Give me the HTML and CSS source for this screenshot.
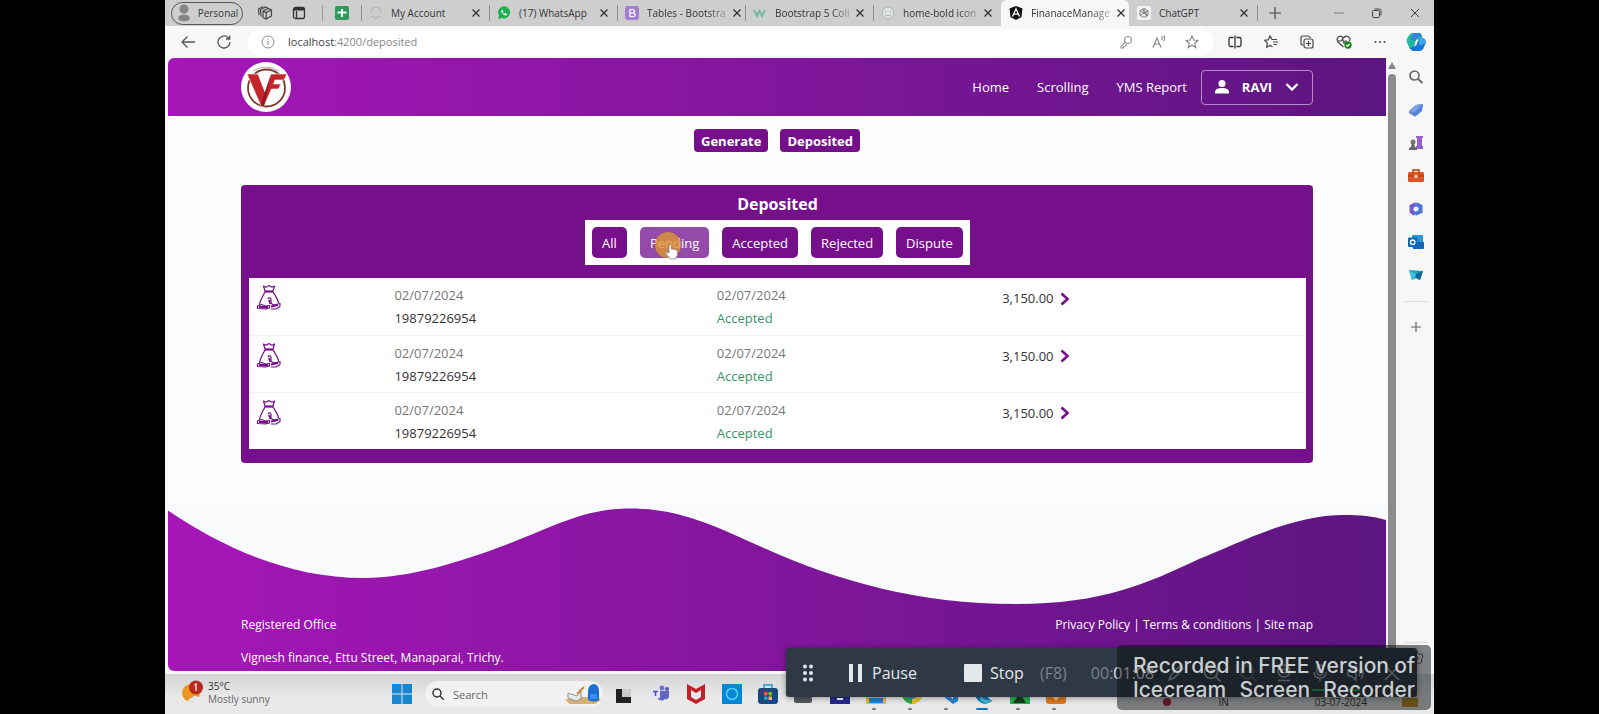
FILE: index.html
```html
<!DOCTYPE html>
<html lang="en">
<head>
<meta charset="utf-8">
<title>FinanaceManagement</title>
<link rel="stylesheet" href="styles.css">
</head>
<body>
<svg class="defs" aria-hidden="true">
  <symbol id="x" viewBox="0 0 10 10"><path d="M1.5 1.5l7 7M8.5 1.5l-7 7" stroke="currentColor" stroke-width="1.3" fill="none"/></symbol>
  <symbol id="chev" viewBox="0 0 12 16"><path d="M2.5 2.5L8.500 8l-6 5.500" stroke="#75108a" stroke-width="2.600" fill="none"/></symbol>
  <symbol id="bag" viewBox="0 0 26 26"><g fill="none" stroke="#75108a" stroke-width="1.200" stroke-linejoin="round"><path d="M9 7L7.500 2l2.500 1.200L13 1.500l3 1.700L18.500 2 17 7M9 8c-2 4-5 8-5.500 13M17 8c2 3 5 7 5.500 11"/><path d="M8.500 7.500h9" stroke-width="2.200"/><path d="M1.500 22l4-1.500 4 1.500 4-.500v2.500l-4 .800-8-.300zM12 15c1-2 3-1 3 .500v4l3 1.500 6-1.500v3l-4 2.500h-5"/><path d="M15 22.500l7-1.500M3 23h9M13 16l1.500 4" stroke-width="2"/></g></symbol>
</svg>
<div class="screen">
  <header class="tabs">
    <button class="profile"><svg width="16" height="20" viewBox="0 0 16 20"><circle cx="8" cy="6" r="4.500" fill="#858585"/><path d="M2 16c0-3 2-4.500 6-4.500s6 1.500 6 4.500c-2 3-10 3-12 0z" fill="#858585"/></svg>Personal</button>
    <div class="tab-tools">
      <svg width="16" height="16" viewBox="0 0 16 16" fill="none" stroke="#444" stroke-width="1.200"><path d="M6 6l5-2.500L14.500 5v6L9 14l-3-1.500zM6 6l3.200 1.500L14.500 5M9.200 7.500V14M4 11.500L3.500 4.500 8.500 2 11 3M2 10L1.500 4 6 1.500"/></svg>
      <svg width="14" height="14" viewBox="0 0 14 14" fill="none" stroke="#333" stroke-width="1.300"><rect x="1.500" y="1.500" width="11" height="11" rx="2"/><path d="M2 3h10" stroke-width="3"/><path d="M4.500 5v7"/></svg>
    </div>
    <div class="pinned"><svg width="14" height="14" viewBox="0 0 14 14"><rect width="14" height="14" rx="2" fill="#2c9b57"/><path d="M7 3v8M2.500 6.500h9" stroke="#fff" stroke-width="2"/></svg></div>
    <div class="tab"><svg class="fav" viewBox="0 0 14 14"><path d="M2 6a5 5 0 0 1 10 0M3 10c2 2.500 6 2.500 8 0" fill="none" stroke="#b4b4b4" stroke-width="1.500"/></svg><span>My Account</span><button aria-label="Close tab"><svg><use href="#x"/></svg></button></div>
    <div class="tab"><svg class="fav" viewBox="0 0 14 14"><path d="M1 13l1-3.500A6 6 0 1 1 5 12z" fill="#1fae50"/><path d="M4.500 4.200c-1 2 2.500 5.800 5 5.200l.500-1.300-1.800-1-.8.800C6.500 7.500 6 7 5.800 6.300l.7-.8-.7-1.500z" fill="#fff"/></svg><span>(17) WhatsApp</span><button aria-label="Close tab"><svg><use href="#x"/></svg></button></div>
    <div class="tab cut"><svg class="fav" viewBox="0 0 14 14"><rect width="14" height="14" rx="3" fill="#a57fd0"/><path d="M5 3.500h2.500q2 0 2 1.700T7.500 7H5zM5 7h3q2 0 2 1.800t-2 1.700H5z" fill="none" stroke="#fff" stroke-width="1.200"/></svg><span>Tables - Bootstra</span><button aria-label="Close tab"><svg><use href="#x"/></svg></button></div>
    <div class="tab cut"><svg class="fav" viewBox="0 0 14 14"><path d="M1 4l3 6 2.500-5L9 10l3-6" fill="none" stroke="#74b8a0" stroke-width="2"/></svg><span>Bootstrap 5 Coll</span><button aria-label="Close tab"><svg><use href="#x"/></svg></button></div>
    <div class="tab cut"><svg class="fav" viewBox="0 0 14 14"><circle cx="7" cy="7" r="6" fill="#dde1e1" stroke="#a9b1b1"/><path d="M4 8c1.500 2.500 4.500 2.500 6 0M4.500 5v1M9.500 5v1" fill="none" stroke="#9aa" /></svg><span>home-bold icon</span><button aria-label="Close tab"><svg><use href="#x"/></svg></button></div>
    <div class="tab cut active"><svg class="fav" viewBox="0 0 14 14"><path d="M7 0l6.500 2.500-1 8.500L7 14l-5.500-3L.5 2.500z" fill="#111"/><path d="M3.500 10.500L7 2.800l3.500 7.700M5 8.200h4" fill="none" stroke="#fff" stroke-width="1.300"/></svg><span>FinanaceManage</span><button aria-label="Close tab"><svg><use href="#x"/></svg></button></div>
    <div class="tab"><svg class="fav" viewBox="0 0 14 14"><rect width="14" height="14" rx="2" fill="#f3f3f3"/><path d="M7 2.500l4 2.200v4.600l-4 2.200-4-2.200V4.700zM7 2.500v4.700l4 2.200M3 4.700l4 2.500-4 2.200M7 7.200l4-2.500M5 3.600l4 2.500v4.300" fill="none" stroke="#666" stroke-width=".8"/></svg><span>ChatGPT</span><button aria-label="Close tab"><svg><use href="#x"/></svg></button></div>
    <button class="new-tab" aria-label="New tab"><svg width="12" height="12" viewBox="0 0 12 12"><path d="M6 0v12M0 6h12" stroke="#444" stroke-width="1.200"/></svg></button>
    <div class="win">
      <button aria-label="Minimise"><svg width="10" height="10" viewBox="0 0 10 10"><path d="M0 5h10" stroke="#777"/></svg></button>
      <button aria-label="Restore"><svg width="10" height="10" viewBox="0 0 10 10" fill="none" stroke="#444"><rect x=".5" y="2.500" width="7" height="7" rx="1"/><path d="M2.500 1h5Q9 1 9 2.500v5"/></svg></button>
      <button aria-label="Close"><svg width="10" height="10" viewBox="0 0 10 10"><path d="M1 1l8 8M9 1L1 9" stroke="#444"/></svg></button>
    </div>
  </header>

  <div class="toolbar">
    <div class="nav-buttons">
      <button aria-label="Back"><svg width="14" height="14" viewBox="0 0 14 14" fill="none" stroke="#555" stroke-width="1.300"><path d="M14 7H1M6.500 1.500L1 7l5.500 5.500"/></svg></button>
      <button aria-label="Reload"><svg width="14" height="14" viewBox="0 0 14 14" fill="none" stroke="#555" stroke-width="1.300"><path d="M13 7a6 6 0 1 1-2-4.500L12.500 4M12.700.5V4H9"/></svg></button>
    </div>
    <div class="address">
      <svg width="14" height="14" viewBox="0 0 14 14" fill="none" stroke="#888"><circle cx="7" cy="7" r="6"/><path d="M7 6v4M7 3.500v1.200"/></svg>
      <a href="#" class="url"><b>localhost</b>:4200/deposited</a>
      <svg width="14" height="14" viewBox="0 0 14 14" fill="none" stroke="#999" stroke-width="1.200"><circle cx="9" cy="5" r="3.500"/><path d="M6.500 7L2 11.500V13h2.500v-1.500H6L8 8.500"/></svg>
      <svg width="14" height="14" viewBox="0 0 14 14" fill="none" stroke="#888" stroke-width="1.200"><path d="M1 12.500L5 3l4 9.500M2.500 9h5M9.500 1.500q1.500 1.500 0 3.500M11.500.5q2.500 2.500 0 5.500"/></svg>
      <svg width="14" height="14" viewBox="0 0 14 14" fill="none" stroke="#888" stroke-width="1.200"><path d="M7 1l1.800 4 4.200.4-3.200 2.900 1 4.200L7 10.300l-3.800 2.200 1-4.200L1 5.400 5.200 5z"/></svg>
    </div>
    <div class="tools">
      <button aria-label="Split screen"><svg width="14" height="14" viewBox="0 0 14 14" fill="none" stroke="#333" stroke-width="1.300"><path d="M5.500 2.500h-3Q1 2.500 1 4v6q0 1.500 1.500 1.500h3M8.500 2.500h3Q13 2.500 13 4v6q0 1.500-1.500 1.500h-3M7 .5v13"/></svg></button>
      <button aria-label="Favourites"><svg width="14" height="14" viewBox="0 0 14 14" fill="none" stroke="#444" stroke-width="1.200"><path d="M13 4.500H8L6 1 4.300 4.800.7 5.300l2.700 2.900-.7 4L6 10.500l2.500 1.300M9 7h5M9.500 9.500H13"/></svg></button>
      <button aria-label="Collections"><svg width="14" height="14" viewBox="0 0 14 14" fill="none" stroke="#444" stroke-width="1.200"><path d="M3 10Q1 10 1 8V3q0-2 2-2h5q2 0 2 2"/><rect x="4" y="4" width="9" height="9" rx="2"/><path d="M8.500 6v5M6 8.500h5"/></svg></button>
      <button aria-label="Browser essentials"><svg width="16" height="14" viewBox="0 0 16 14" fill="none" stroke="#444" stroke-width="1.200"><path d="M7.500 12L2 7Q0 4 2.500 2T7.500 3Q10 0 12.500 2t1 4M2 6h3l1.500-2L8 8l1-2h2"/><circle cx="12" cy="10" r="3.700" fill="#1c831c" stroke="none"/><path d="M10.300 10l1.200 1.200L13.800 9" stroke="#fff"/></svg></button>
      <button aria-label="More"><svg width="12" height="4" viewBox="0 0 12 4" fill="#444"><circle cx="1.500" cy="2" r="1"/><circle cx="6" cy="2" r="1"/><circle cx="10.500" cy="2" r="1"/></svg></button>
    </div>
    <button class="copilot" aria-label="Copilot"><svg width="20" height="20" viewBox="0 0 20 20"><path d="M7 1h6q2 0 3 3l1 4-7 1-3 9q-3 0-4-3L.8 10Q0 7 2 5q2-4 5-4z" fill="#22b5a0"/><path d="M13 19H7q-2 0-3-3l5-2 3-8h5q3 1 2.700 5L18 15q-1 4-5 4z" fill="#1976d5"/><path d="M7 1h6q2 0 3 4h-4L10 9 5 8z" fill="#2f86d8"/><path d="M12 6h5q3 1 2.700 5l-6 3z" fill="#3fa5ee"/><path d="M8.500 14l1.800-6.500h2L10.500 13z" fill="#fff"/></svg></button>
  </div>

  <div class="main">
    <div class="page">
      <nav class="site-nav">
        <a href="#" aria-label="Vignesh finance"><svg class="logo" viewBox="0 0 50 50"><circle cx="25" cy="25" r="25" fill="#fff"/><path d="M12 9Q25 1 38 9" fill="none" stroke="#c8a7a7" stroke-width="1"/><circle cx="25.500" cy="26" r="18.500" fill="none" stroke="#7b3a2c" stroke-width="1.800"/><path d="M6 12h11l7 18 6-18h16l-3 6H34l-1.500 4H40l-2.500 5h-7L23 44h-3z" fill="#c4262c" stroke="#fff" stroke-width=".6"/><path d="M24 30l6-18-7 32h-3z" fill="#8d171d"/></svg></a>
        <div class="links">
          <a href="#">Home</a><a href="#">Scrolling</a><a href="#">YMS Report</a>
          <button class="user"><svg width="14" height="14" viewBox="0 0 14 14" fill="#fff"><circle cx="7" cy="3.500" r="3.500"/><path d="M0 13.500V12q0-4 7-4t7 4v1.500z"/></svg><b>RAVI</b><svg width="14" height="10" viewBox="0 0 14 10"><path d="M1.500 2L7 7.500 12.500 2" fill="none" stroke="#fff" stroke-width="2.400"/></svg></button>
        </div>
      </nav>
      <div class="actions"><button>Generate</button><button>Deposited</button></div>
      <section class="card">
        <h1>Deposited</h1>
        <div class="filters">
          <button>All</button>
          <button class="hover">Pending<svg class="pointer" width="26" height="28" viewBox="0 0 26 28"><circle cx="13" cy="13" r="13" fill="#dc9630" fill-opacity=".8"/><path d="M14 13q1.500-1 2 .5l.5 3.500 4 .5q2 .5 2 2.500v3l-2 4h-5L11 22q-1-2 1-2l2 1z" fill="#fff" stroke="#777" stroke-width=".7"/></svg></button>
          <button>Accepted</button><button>Rejected</button><button>Dispute</button>
        </div>
        <table>
          <tr><td><svg class="bag"><use href="#bag"/></svg></td><td><p class="muted">02/07/2024</p><p>19879226954</p></td><td><p class="muted">02/07/2024</p><p class="ok">Accepted</p></td><td><div class="amount">3,150.00<svg><use href="#chev"/></svg></div></td></tr>
          <tr><td><svg class="bag"><use href="#bag"/></svg></td><td><p class="muted">02/07/2024</p><p>19879226954</p></td><td><p class="muted">02/07/2024</p><p class="ok">Accepted</p></td><td><div class="amount">3,150.00<svg><use href="#chev"/></svg></div></td></tr>
          <tr><td><svg class="bag"><use href="#bag"/></svg></td><td><p class="muted">02/07/2024</p><p>19879226954</p></td><td><p class="muted">02/07/2024</p><p class="ok">Accepted</p></td><td><div class="amount">3,150.00<svg><use href="#chev"/></svg></div></td></tr>
        </table>
      </section>
      <footer class="footer">
        <svg class="wave" viewBox="0 0 1218 102" preserveAspectRatio="none"><path d="M0 0H1218V17C1205 13 1192 12 1176 12C1125 12 1075 38 1031 56C980 80 935 101 848 101C750 101 670 78 597 45.500C550 25 515 5.500 462 5.500C415 5.500 385 24 340 41C290 60 240 75 196 75C125 75 60 48 0 7.500z" fill="#f9fafb"/></svg>
        <div class="foot-row"><span>Registered Office</span><span><a href="#">Privacy Policy</a> | <a href="#">Terms &amp; conditions</a> | <a href="#">Site map</a></span></div>
        <p>Vignesh finance, Ettu Street, Manaparai, Trichy.</p>
      </footer>
    </div>
    <div class="scrollbar"><svg width="8" height="7" viewBox="0 0 8 7"><path d="M4 0l4 7H0z" fill="#858585"/></svg><div class="thumb"></div></div>
    <aside class="side">
      <svg viewBox="0 0 16 16" fill="none" stroke="#666" stroke-width="1.700"><circle cx="6.500" cy="6.500" r="4.500"/><path d="M10 10l4.500 4"/></svg>
      <svg viewBox="0 0 16 16"><path d="M1 9l7-6 6-1q1 0 1 1l-1 6-6 5q-1 1-2 0L1 11z" fill="#5580d4"/><path d="M1 9l7-6 6-1-8 9z" fill="#7ca1e8"/></svg>
      <svg viewBox="0 0 16 16"><path d="M8 1h7v2h-1v8h1v3H8v-3h1V3H8z" fill="#9461c9"/><circle cx="5" cy="7" r="2.500" fill="#777"/><path d="M4 8h2l1 4 2 1v2H1v-2l2-1z" fill="#696969"/></svg>
      <svg viewBox="0 0 16 16"><path d="M5 4V2h6v2" fill="none" stroke="#a63812" stroke-width="1.500"/><rect y="4" width="16" height="10" rx="1.500" fill="#dc5426"/><path d="M0 8h16" stroke="#a63812"/><rect x="6.500" y="7" width="3" height="3" fill="#ffd0b0"/></svg>
      <svg viewBox="0 0 16 16" fill="none" stroke-width="4"><path d="M8 3L3.500 5.500v5L7 13" stroke="#7459cb"/><path d="M7 13l5.500-2.500v-5L8 3" stroke="#4877d8"/></svg>
      <svg viewBox="0 0 16 16"><rect x="4" y="1" width="11" height="13" rx="1" fill="#2497df"/><path d="M7 8h9v6q0 1-1 1H5z" fill="#1666b8"/><rect y="3.500" width="9.500" height="9.500" rx="1" fill="#1267b5"/><circle cx="4.700" cy="8.200" r="2.200" fill="none" stroke="#fff" stroke-width="1.300"/></svg>
      <svg viewBox="0 0 16 16"><path d="M1 3l14 1-3 9-4-2-4 2z" fill="#1b9fc4"/><path d="M15 4L8 7v4l4 2z" fill="#126491"/><path d="M1 3l7 4-4 6z" fill="#44c1dc"/></svg>
      <hr>
      <svg viewBox="0 0 16 16" stroke="#666" stroke-width="1.200"><path d="M8 3v10M3 8h10"/></svg>
      <div class="side-end"><hr><svg viewBox="0 0 16 16" fill="none" stroke="#555"><circle cx="8" cy="8" r="2"/><path d="M6.500 1.500h3l.5 2 2 1 2-.5 1 3-1.500 1.500L14 12l-3 2-1.500-1h-3L5 14l-3-3 .5-2L1 7l1-3h2z"/></svg></div>
    </aside>
  </div>

  <div class="taskbar">
    <div class="weather"><svg width="24" height="24" viewBox="0 0 24 24"><circle cx="10" cy="13" r="9" fill="#e99622"/><path d="M7 22q0-4 4-4 2-4 6-1 4 0 4 4z" fill="#e8e8ef"/><circle cx="15" cy="7.500" r="7" fill="#b92b20"/><path d="M13.500 5L15 4v7" fill="none" stroke="#fff" stroke-width="1.200"/></svg><div><p>35°C</p><p class="dim">Mostly sunny</p></div></div>
    <div class="apps">
      <svg viewBox="0 0 20 20" fill="#1687d0"><path d="M0 0h9.500v9.500H0zM10.500 0H20v9.500h-9.500zM0 10.500h9.500V20H0zM10.500 10.500H20V20h-9.500z"/></svg>
      <label class="search"><svg width="12" height="12" viewBox="0 0 12 12" fill="none" stroke="#333" stroke-width="1.500"><circle cx="5" cy="5" r="4"/><path d="M8 8l4 4"/></svg><input type="text" placeholder="Search" aria-label="Search"><svg width="36" height="20" viewBox="0 0 36 20"><path d="M0 16l8-3h25l3 3-6 4H5z" fill="#d8ae72"/><path d="M3 9l9 3 4-5v8l-5 2-8-3z" fill="#e8eaea" stroke="#8e9893"/><path d="M12 10l7-7" stroke="#db8638" stroke-width="2"/><path d="M23 16V7q0-6 6-7 5 1 5 7v9q-5 3-11 0z" fill="#1b6ed0"/><path d="M25 10h7v5h-7z" fill="#3490ec"/></svg></label>
      <svg viewBox="0 0 20 20"><path d="M8 5h9v9H8z" fill="#c9c9c9"/><path d="M2 5h6v8h9v6H2z" fill="#222"/></svg>
      <svg viewBox="0 0 20 20"><circle cx="12" cy="4" r="2.500" fill="#6f72d0"/><circle cx="17" cy="5" r="2" fill="#5558af"/><path d="M7 7h12v6q-1 3-4 2-3 3-7 0z" fill="#6266c5"/><path d="M1 5h9v9H1z" fill="#e3e3f7"/><path d="M3 7.500h5M5.500 7.500V12" stroke="#4b50b0" stroke-width="1.500"/></svg>
      <svg viewBox="0 0 20 20"><path d="M1 0l9 5 9-5v15l-9 5-9-5z" fill="#c3202b"/><path d="M5 6l5 3 5-3v7l-5 3-5-3z" fill="#e6e4e4"/></svg>
      <svg viewBox="0 0 20 20"><path d="M0 0h20v20H0z" fill="#0787d2"/><circle cx="10" cy="10" r="5.500" fill="none" stroke="#55d3fb" stroke-width="1.500"/></svg>
      <svg viewBox="0 0 20 20"><path d="M6 5V1h8v4" fill="none" stroke="#2896ce" stroke-width="1.500"/><rect y="4" width="20" height="16" rx="3" fill="#17497a"/><path d="M6 8h3.500v3.500H6z" fill="#e95d35"/><path d="M10.500 8H14v3.500h-3.500z" fill="#82b52c"/><path d="M6 12.500h3.500V16H6z" fill="#269bd8"/><path d="M10.500 12.500H14V16h-3.500z" fill="#f2bc32"/></svg>
      <svg viewBox="0 0 20 20"><rect y="2" width="18" height="17" rx="2" fill="#55595e"/></svg>
      <svg viewBox="0 0 20 20"><path d="M0 0h20v20H0z" fill="#25278d"/><path d="M7 15h6" stroke="#fff" stroke-width="2"/></svg>
      <svg viewBox="0 0 20 20"><path d="M0 3h20v17H0z" fill="#e8bd37"/><path d="M3 14h14v5H3z" fill="#277fc7"/></svg>
      <svg viewBox="0 0 20 20"><circle cx="10" cy="10" r="10" fill="#35a44b"/><path d="M10 10h10a10 10 0 0 1-10 10z" fill="#f1c12d"/><circle cx="10" cy="10" r="5" fill="#347cdb"/></svg>
      <svg viewBox="0 0 20 20"><path d="M15 0l5 3v14l-5 3L0 8l2-3 13 10z" fill="#2585cd"/></svg>
      <svg class="current" viewBox="0 0 20 20"><path d="M0 10Q1 0 11 0t9 9q-1 4-7 3 3 5 6 4-9 8-16-1z" fill="#1971bb"/><path d="M7 12q2 5 11 4-6 6-12 0z" fill="#43c5d5"/></svg>
      <svg viewBox="0 0 20 20"><path d="M0 0h20v20H0z" fill="#25b34b"/><path d="M3 19l7-10 6 10z" fill="#163b20"/></svg>
      <svg viewBox="0 0 20 20"><rect width="20" height="20" rx="3" fill="#db7822"/><path d="M5 9l5 6 5-6" fill="none" stroke="#f6d2a0" stroke-width="2"/></svg>
    </div>
    <div class="running"><i></i><i></i><i></i><i class="on"></i><i></i><i></i></div>
    <div class="tray"><svg width="10" height="10" viewBox="0 0 10 10"><circle cx="5" cy="5" r="4" fill="#b3273c"/></svg><span>IN</span><time>03-07-2024</time><svg width="16" height="9" viewBox="0 0 16 9"><path d="M0 0h16v9H0z" fill="#c59423"/></svg></div>
  </div>

  <div class="recorder">
    <svg width="12" height="18" viewBox="0 0 12 18" fill="#e5e8ea"><circle cx="3" cy="2.500" r="2"/><circle cx="9" cy="2.500" r="2"/><circle cx="3" cy="9" r="2"/><circle cx="9" cy="9" r="2"/><circle cx="3" cy="15.500" r="2"/><circle cx="9" cy="15.500" r="2"/></svg>
    <button class="pause"><svg width="13" height="18" viewBox="0 0 13 18" fill="#e5e8ea"><path d="M0 0h4v18H0zM9 0h4v18H9z"/></svg>Pause</button>
    <button class="stop"><svg width="18" height="18" viewBox="0 0 18 18"><rect width="18" height="18" rx="1" fill="#e5e8ea"/></svg>Stop <i>(F8)</i></button>
    <span class="timer"><i>00:</i>01:08</span>
    <div class="rec-tools">
      <svg viewBox="0 0 18 18"><path d="M2 16l2-5 9-9 3 3-9 9z"/></svg>
      <svg viewBox="0 0 18 18"><circle cx="8" cy="8" r="6.500"/><path d="M13 13l5 5M8 5v6M5 8h6"/></svg>
      <svg viewBox="0 0 18 18" opacity=".4"><circle cx="8" cy="8" r="6.500"/><path d="M13 13l5 5"/></svg>
      <svg viewBox="0 0 18 18"><circle cx="9" cy="7" r="6"/><circle cx="9" cy="7" r="2"/><path d="M3 16.500h12"/></svg>
      <svg viewBox="0 0 18 18"><rect x="6" y="1" width="6" height="10" rx="3"/><path d="M3 8q0 6 6 6t6-6M9 14v3"/></svg>
      <svg viewBox="0 0 18 18"><path d="M1 6h3l5-4v14l-5-4H1zM12 6q2 3 0 6M14 3q4 6 0 12"/></svg>
      <svg viewBox="0 0 18 18"><path d="M2 2l14 14M16 2L2 16"/></svg>
    </div>
    <div class="levels"><hr><hr></div>
  </div>
  <div class="watermark">
    <p><span>Recorded</span><span>in</span><span>FREE</span><span>version</span><span>of</span></p>
    <p><span>Icecream</span><span>Screen</span><span>Recorder</span></p>
  </div>
</div>
</body>
</html>
```
FILE: styles.css
```css
* { box-sizing: border-box; }
body { margin: 0; padding: 0 165px; background: #000; font: 13px/20px "Open Sans", "Noto Sans", sans-serif; color: #333; }
p, h1 { margin: 0; }
button { font: inherit; color: inherit; border: 0; background: none; padding: 0; display: flex; align-items: center; justify-content: center; }
a { color: inherit; text-decoration: none; }
svg { flex: none; display: block; }
i { font-style: normal; }
.defs { position: absolute; width: 0; height: 0; }
.screen { position: relative; height: 100vh; display: flex; flex-direction: column; background: #f7f7f7; overflow: hidden; }

/* Browser tabs */
.tabs { display: flex; height: 26px; background: #cecece; align-items: center; font-size: 10px; line-height: 16px; }
.profile { height: 23px; margin-left: 6px; width: 72px; border: 1px solid #555; border-radius: 12px; gap: 6px; }
.tab-tools { display: flex; align-items: center; gap: 19px; padding: 0 16px 0 14px; height: 16px; border-right: 1px solid #999; }
.pinned { display: flex; justify-content: center; width: 38px; }
.tab { flex: 0 1 128px; min-width: 0; height: 26px; display: flex; align-items: center; gap: 8px; padding: 0 8px; background: linear-gradient(#8f8f8f, #8f8f8f) 0 5px / 1px 16px no-repeat; }
.tab.active { background: #f7f7f7; border-radius: 6px 6px 0 0; }
.active + .tab { background: none; }
.tab .fav { width: 14px; height: 14px; }
.tab span { flex: 1; white-space: nowrap; }
.cut { gap: 6px; }
.cut .fav { margin-right: 2px; }
.cut span { -webkit-mask-image: linear-gradient(90deg, #000 75%, rgba(0,0,0,.3)); mask-image: linear-gradient(90deg, #000 75%, rgba(0,0,0,.3)); }
.tab button svg { width: 10px; height: 10px; }
.new-tab { width: 34px; height: 16px; border-left: 1px solid #8f8f8f; }
.win { margin-left: auto; display: flex; gap: 28px; padding-right: 14px; }

/* Address bar */
.toolbar { height: 32px; flex: none; display: flex; align-items: center; }
.nav-buttons { width: 83px; display: flex; gap: 22px; padding-left: 16px; }
.address { flex: 1; height: 27px; background: #fff; border-radius: 14px; display: flex; align-items: center; gap: 19px; padding: 0 14px 0 13px; }
.url { flex: 1; margin-left: -6px; font-size: 11px; color: #888; }
.url b { font-weight: 400; color: #444; }
.tools { display: flex; gap: 22px; padding: 0 20px 0 15px; }
.copilot { margin-right: 8px; }

/* Page viewport */
.main { flex: 1; min-height: 0; display: flex; padding-left: 3px; }
.page { flex: 1; background: #fefefe; border-radius: 6px 0 0 6px; overflow: hidden; display: flex; flex-direction: column; margin-bottom: 3px; }
.site-nav { height: 58px; flex: none; padding: 0 73px; display: flex; align-items: center; justify-content: space-between; color: #fff; background: linear-gradient(90deg, #a616b8, #5c1580); }
.logo { width: 50px; height: 50px; }
.links { display: flex; align-items: center; gap: 28px; }
.user { width: 112px; height: 35px; margin-left: -14px; border: 1px solid #b78ac9; border-radius: 4px; gap: 13px; }
.user b { font-weight: 700; }
.actions { display: flex; justify-content: center; gap: 12px; padding: 13px 0 33px; }
.actions button { height: 23px; padding: 0 7px; border-radius: 4px; background: #75108a; color: #fff; font-weight: 700; }
.card { margin: 0 73px; padding: 8px 7px 14px 8px; border-radius: 4px; background: #75108a; display: flex; flex-direction: column; align-items: center; }
.card h1 { color: #fff; font-size: 16px; line-height: 22px; font-weight: 700; margin-bottom: 5px; }
.filters { display: flex; gap: 13px; padding: 7px; background: #fff; margin-bottom: 13px; }
.filters button { height: 31px; padding: 0 10px; border-radius: 5px; background: #75108a; color: #fff; position: relative; }
.filters .hover { background: #944aa8; }
.pointer { position: absolute; left: 15px; top: 5px; }
table { width: 100%; table-layout: fixed; border-collapse: collapse; background: #fff; }
td { height: 57px; padding: 6px 8px 4px; vertical-align: top; border-bottom: 1px solid #eee; line-height: 23px; }
tr:last-child td { border: 0; }
td:nth-child(1) { width: 13%; padding-left: 7px; }
td:nth-child(2) { width: 30.5%; }
td:nth-child(3) { width: 27%; }
.muted { color: #777; }
.ok { color: #359568; }
.bag { width: 26px; height: 26px; }
.amount { display: flex; align-items: center; gap: 5px; padding-top: 3px; }
.amount svg { width: 12px; height: 16px; }
.footer { margin-top: auto; height: 168px; color: #fff; background: linear-gradient(90deg, #a616b8, #5c1580); font-size: 12px; }
.wave { width: 100%; height: 102px; }
.footer p, .foot-row { padding: 0 73px; }
.foot-row { display: flex; justify-content: space-between; padding-top: 10px; margin-bottom: 13px; }
.scrollbar { width: 12px; display: flex; flex-direction: column; align-items: center; padding-top: 4px; gap: 5px; }
.thumb { flex: 1; width: 8px; border-radius: 4px; background: #8b8b8b; }
.side { width: 36px; border-left: 1px solid #eee; display: flex; flex-direction: column; align-items: center; padding: 11px 1px 0 0; gap: 17px; }
.side svg { width: 16px; height: 16px; }
.side hr { width: 24px; margin: 0; border: 0; border-top: 1px solid #ddd; }
.side > hr { margin-top: 1px; }
.side-end { margin-top: auto; padding-bottom: 8px; display: grid; gap: 7px; justify-items: center; }

/* Taskbar */
.taskbar { height: 40px; flex: none; display: flex; align-items: center; background: linear-gradient(#d4d4d4, #e9e9e9 60%); position: relative; padding-bottom: 2px; }
.weather { display: flex; width: 227px; padding-left: 16px; gap: 3px; font-size: 10px; line-height: 13px; }
.dim { color: #666; }
.apps { display: flex; align-items: center; gap: 16px; padding-top: 2px; }
.apps > svg { width: 20px; height: 20px; }
.running { position: absolute; left: 707px; bottom: 4px; display: flex; gap: 32px; }
.running i { width: 4px; height: 2px; border-radius: 1px; background: #777; }
.running .on { width: 12px; margin: 0 -4px; background: #1971bb; }
.search { width: 178px; height: 26px; margin: 0 -5px 0 -3px; padding: 0 2px 0 7px; display: flex; align-items: center; gap: 9px; border-radius: 13px; background: #f1f1f1; }
.search input { flex: 1; min-width: 0; padding: 0; border: 0; outline: 0; background: none; font: 11px "Open Sans", sans-serif; }
.search input::placeholder { color: #666; }
.tray { margin-left: auto; display: flex; align-items: center; font-size: 10px; padding: 18px 16px 0 0; }
.tray span { margin: 0 86px 0 46px; }
.tray time { margin-right: 35px; }

/* Screen recorder overlay */
.recorder { position: absolute; right: 17px; bottom: 17px; width: 631px; height: 49px; display: flex; align-items: center; padding: 0 16px 0 16px; border-radius: 3px; background: #2f3946; color: #e5e8ea; font-size: 16px; box-shadow: 0 1px 6px rgba(0,0,0,.4); }
.recorder button { white-space: pre; gap: 10px; }
.pause { margin-left: 35px; }
.stop { margin-left: 47px; }
.stop i, .timer i { color: #7b838c; }
.recorder .stop { gap: 8px; }
.stop i { margin-left: 4px; }
.timer { margin-left: 24px; }
.rec-tools { margin-left: auto; display: flex; gap: 18px; }
.rec-tools svg { width: 18px; height: 18px; fill: none; stroke: #a3a9ae; stroke-width: 1.5; }
.levels { position: absolute; right: 57px; bottom: 6px; display: flex; gap: 20px; }
.levels hr { width: 14px; margin: 0; border: 0; border-top: 2px solid #1fa34c; }
.watermark { position: absolute; right: 3px; bottom: 4px; width: 314px; height: 65px; padding: 9px 16px; border-radius: 5px; background: rgba(10,12,14,.5); color: #c9cdcf; font: 500 21px/24px Inter, sans-serif; }
.watermark p { display: flex; justify-content: space-between; }
```
